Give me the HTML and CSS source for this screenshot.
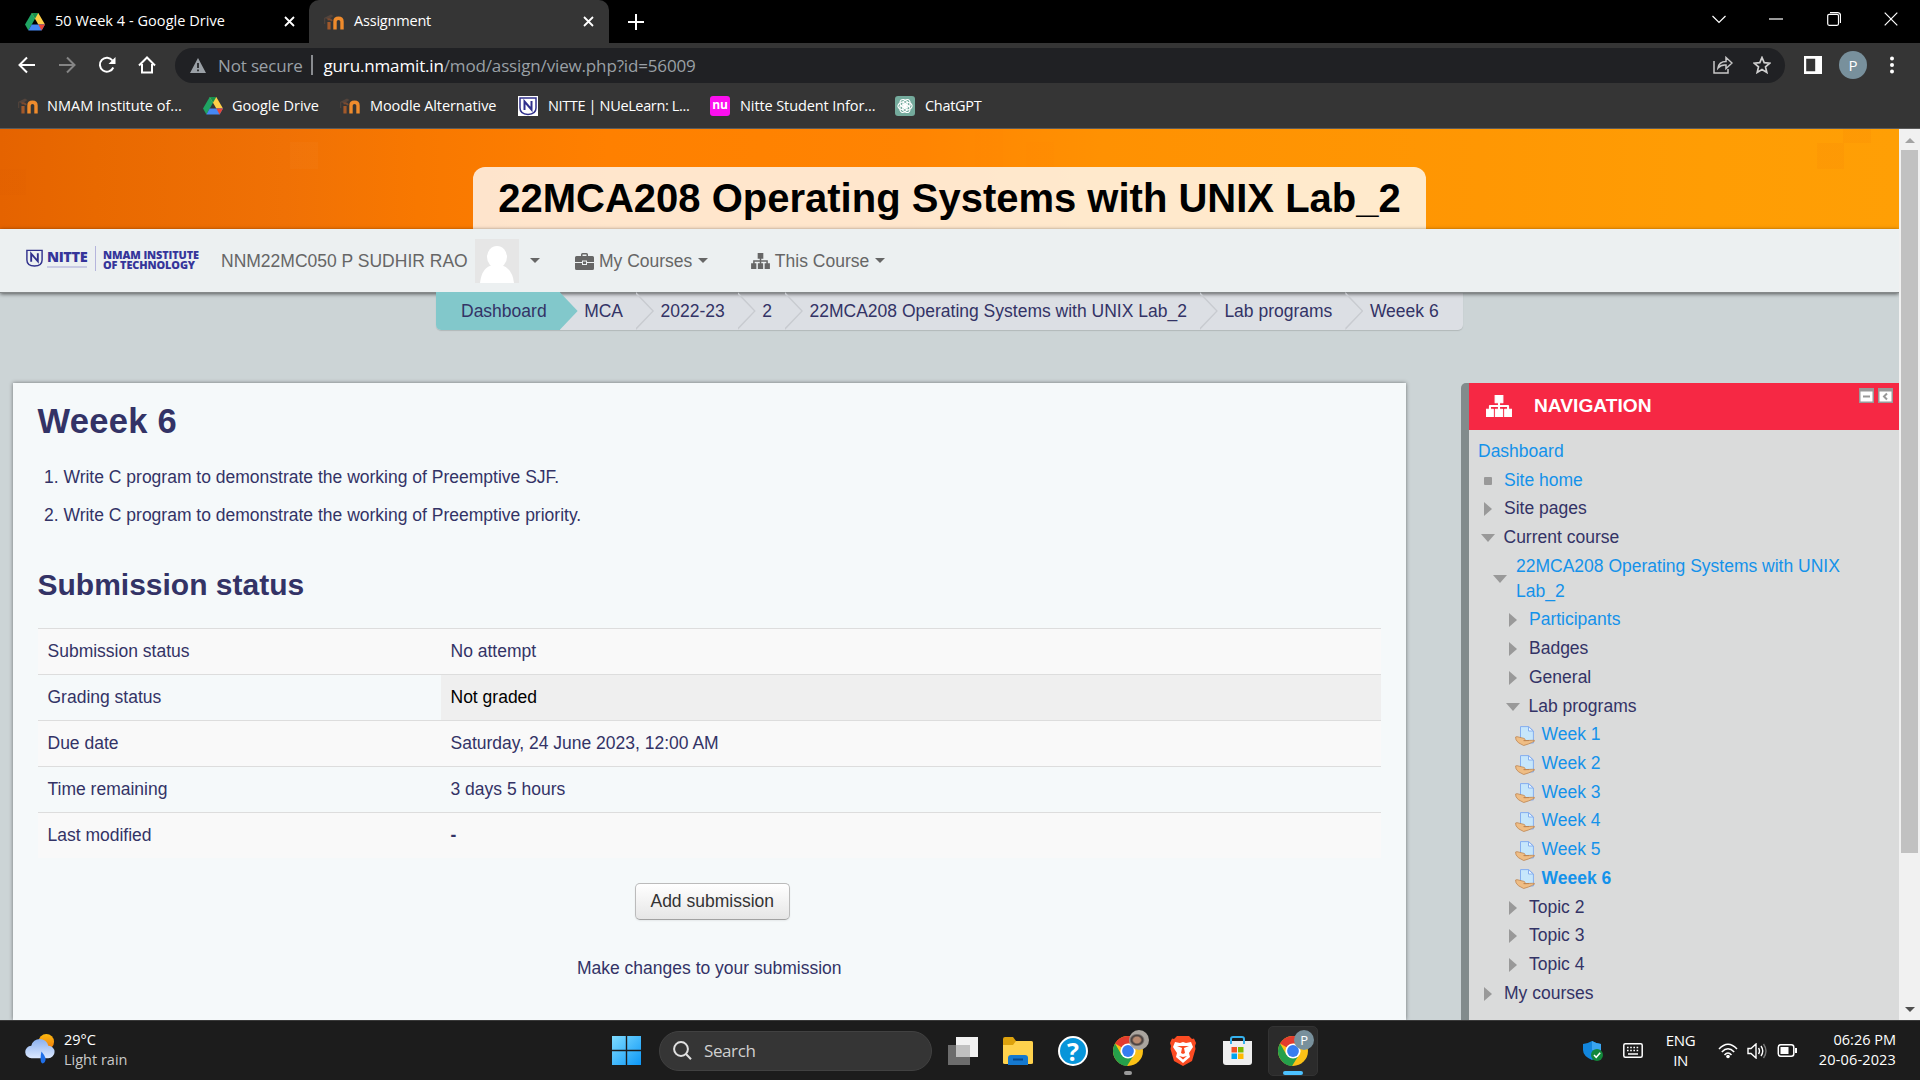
FILE: index.html
```html
<!DOCTYPE html>
<html lang="en">
<head>
<meta charset="utf-8">
<title>Assignment</title>
<link rel="stylesheet" href="styles.css">
</head>
<body>
<svg width="0" height="0" class="defs">
  <symbol id="drive" viewBox="0 0 20 18">
    <path d="M6.7 0h6.6L3.4 17.4 0 11.6z" fill="#1fa463"/><path d="M6.7 0h6.6L20 11.6h-6.7z" fill="#ffcf48"/><path d="M3.4 17.4 6.7 11.6H20l-3.4 5.8z" fill="#4688f4"/><path d="M6.7 0h6.6L10 5.8z" fill="#188f4d"/><path d="M13.3 11.6H20l-3.4 5.8z" fill="#ea4335"/>
  </symbol>
  <symbol id="moodle" viewBox="0 0 20 18">
    <path d="M5 16.500V9" fill="none" stroke="#a2592b" stroke-width="3.200"/><path d="M11 16.500V8.500q0-3.300 3.500-3.300t3.500 3.300v8" fill="none" stroke="#ef8b2c" stroke-width="3.400"/><path d="M0 5l7-3.500 2.500 1.500L4.500 6.500z" fill="#54443c"/><path d="M3.500 6.500q3-1 4.500 1.500" fill="none" stroke="#7a4a30" stroke-width="2"/><path d="M.7 5v6" stroke="#54443c"/>
  </symbol>
  <symbol id="sitemap" viewBox="0 0 20 17">
    <path d="M7 0h6v6H7zM0 11h5.600v6H0zM7.200 11h5.600v6H7.200zM14.400 11H20v6h-5.600z"/><path d="M10 5v7M3 12V8.500h14V12" fill="none" stroke="currentColor" stroke-width="1.600"/>
  </symbol>
  <symbol id="shieldn" viewBox="0 0 20 20">
    <path d="M2 2h16v10q0 6-8 6.500Q2 18 2 12z" fill="none" stroke="#30308c" stroke-width="1.500"/><path d="M6.500 14V5.500l7 8V5" fill="none" stroke="#30308c" stroke-width="2"/>
  </symbol>
  <symbol id="assign" viewBox="0 0 20 20">
    <path d="M5.500.6h8.200L18.400 5v12H5.500z" fill="#c6e6fb" stroke="#85aeef"/><path d="M13.500.8V5h4.700z" fill="#f3faff" stroke="#85aeef"/><path d="M.6 11q1-.8 3.500.2l5 1.200q2 1 .3 2.200l8-.3q2.600-.2 2.200.8-3.200 1.700-6.200 2.900l-4.700 1.500-5.200-2.700q-3.500-3-2.900-5.800z" fill="#efbd84" stroke="#bf8550" stroke-width=".8"/><path d="M8.500 14.600H14" stroke="#bf8550"/>
  </symbol>
  <symbol id="chrome" viewBox="0 0 32 32">
    <circle cx="16" cy="16" r="15" fill="#fbc116"/><path d="M16 16 3 8.500A15 15 0 0 1 29 8.500H16z" fill="#e33b2e"/><path d="M3 8.500A15 15 0 0 0 15 31l7.500-12L16 16 9.500 19.700z" fill="#25a04b"/><circle cx="16" cy="16" r="7.600" fill="#fff"/><circle cx="16" cy="16" r="5.900" fill="#367df0"/>
  </symbol>
</svg>

<div class="window">
  <header class="tabs">
    <div class="tab tab-idle"><svg class="i20" viewBox="0 0 20 18"><use href="#drive"/></svg><span>50 Week 4 - Google Drive</span><svg class="x" viewBox="0 0 11 11"><path d="M1 1l9 9M10 1l-9 9"/></svg></div>
    <div class="tab tab-active"><svg class="i20"><use href="#moodle"/></svg><span>Assignment</span><svg class="x" viewBox="0 0 11 11"><path d="M1 1l9 9M10 1l-9 9"/></svg></div>
    <svg class="plus" viewBox="0 0 16 16"><path d="M8 0v16M0 8h16"/></svg>
    <div class="winctl">
      <svg viewBox="0 0 14 14"><path d="M.5 4 7 10.500 13.500 4"/></svg>
      <svg viewBox="0 0 14 14"><path d="M0 7h14"/></svg>
      <svg viewBox="0 0 14 14"><rect x=".7" y="2.300" width="10.800" height="11" rx="1.500"/><path d="M3 .7h7.500q3 0 3 3V11"/></svg>
      <svg viewBox="0 0 14 14"><path d="M.7.700l12.600 12.600M13.300.700.700 13.300"/></svg>
    </div>
  </header>

  <div class="toolbar">
    <div class="navbtns">
      <svg viewBox="0 0 18 18"><path d="M17 9H2M9 1.500 1.500 9 9 16.500"/></svg>
      <svg class="dim" viewBox="0 0 18 18"><path d="M1 9h15M9 1.500 16.500 9 9 16.500"/></svg>
      <svg viewBox="0 0 18 18"><path d="M15.300 11.500A7 7 0 1 1 14.500 4.500"/><path d="M17.500 1v7h-7z" fill="#fff" stroke="none"/></svg>
      <svg viewBox="0 0 18 18"><path d="M1 9.500 9 1.500l8 8M4 8v8.500h10V8"/></svg>
    </div>
    <div class="omni">
      <svg class="warn" viewBox="0 0 16 15"><path d="M8 0l8 15H0z" fill="#9aa0a6"/><path d="M8 5v5M8 11.500v1.800" stroke="#202124" stroke-width="1.700"/></svg>
      <span class="insecure">Not secure</span><i class="bar"></i>
      <span class="url"><b>guru.nmamit.in</b>/mod/assign/view.php?id=56009</span>
      <svg class="share" viewBox="0 0 20 18"><path d="M1 5v12h14v-4M5 12q1-6.500 8-6.500V1.500l6 5.500-6 5.500V9Q8 8.500 5 12z"/></svg>
      <svg class="star" viewBox="0 0 18 18"><path d="M9 1.500l2.200 5.200 5.600.5-4.300 3.700 1.300 5.500L9 13.500l-4.800 2.900 1.300-5.500L1.200 7.200l5.600-.5z"/></svg>
    </div>
    <svg class="panel" viewBox="0 0 18 18"><path d="M0 0h18v18H0zM2.200 2.700v12.600h9V2.700z" fill="#fff" fill-rule="evenodd"/></svg>
    <span class="me">P</span>
    <svg class="dots" viewBox="0 0 4 18"><circle cx="2" cy="2.500" r="2"/><circle cx="2" cy="9" r="2"/><circle cx="2" cy="15.500" r="2"/></svg>
  </div>

  <nav class="bookmarks">
    <a class="bm bm1"><svg class="i20"><use href="#moodle"/></svg><span>NMAM Institute of...</span></a>
    <a class="bm bm2"><svg class="i20" viewBox="0 0 20 18"><use href="#drive"/></svg><span>Google Drive</span></a>
    <a class="bm bm3"><svg class="i20"><use href="#moodle"/></svg><span>Moodle Alternative</span></a>
    <a class="bm bm4"><svg class="i20 whitebg"><use href="#shieldn"/></svg><span>NITTE | NUeLearn: L...</span></a>
    <a class="bm bm5"><i class="nu">nu</i><span>Nitte Student Infor...</span></a>
    <a class="bm bm6"><svg class="i20 gpt" viewBox="0 0 20 20"><g fill="none" stroke="#fff" stroke-width="1.100"><path id="petal" d="M10 4.200q3.500-2 5 1.500v4l-3.500 2-3.500-2V6z"/><use href="#petal" transform="rotate(60 10 10)"/><use href="#petal" transform="rotate(120 10 10)"/><use href="#petal" transform="rotate(180 10 10)"/><use href="#petal" transform="rotate(240 10 10)"/><use href="#petal" transform="rotate(300 10 10)"/></g></svg><span>ChatGPT</span></a>
  </nav>

  <div class="viewport">
    <div class="page">
      <div class="banner"><h1><span>22MCA208 Operating Systems with UNIX Lab_2</span></h1></div>
      <div class="navbar">
        <div class="logo"><svg class="crest"><use href="#shieldn"/></svg><div class="nitte"><b>NITTE</b><i></i></div><div class="inst">NMAM INSTITUTE<br>OF TECHNOLOGY</div></div>
        <span class="user">NNM22MC050 P SUDHIR RAO</span>
        <svg class="avatar" viewBox="0 0 44 44"><path d="M0 0h44v44H0z" fill="#e6e6e6"/><ellipse cx="22" cy="18" rx="10" ry="11" fill="#fff"/><path d="M5 44q2-17 14-18h6q12 2 14 18z" fill="#fff"/></svg>
        <i class="caret c1"></i>
        <svg class="case" viewBox="0 0 19 17"><path d="M6 3V1.500Q6 0 7.500 0h4Q13 0 13 1.500V3h4.500Q19 3 19 4.500V9h-7V7.500H7V9H0V4.500Q0 3 1.500 3zm1.500 0h4V1.500h-4zM0 10h7v2h5v-2h7v5.500q0 1.500-1.500 1.500h-16Q0 17 0 15.500zM8 8.500h3V11H8z"/></svg>
        <span class="menu">My Courses</span><i class="caret"></i>
        <svg class="tree" viewBox="0 0 20 17"><use href="#sitemap"/></svg>
        <span class="menu">This Course</span><i class="caret"></i>
      </div>
      <div class="crumbs"><ul>
        <li class="home"><span>Dashboard</span></li><li><span>MCA</span></li><li><span>2022-23</span></li><li><span>2</span></li><li><span>22MCA208 Operating Systems with UNIX Lab_2</span></li><li><span>Lab programs</span></li><li class="last"><span>Weeek 6</span></li>
      </ul></div>
      <div class="columns">
        <main class="card">
          <h2>Weeek 6</h2>
          <p class="item">1. Write C program to demonstrate the working of Preemptive SJF.</p>
          <p class="item">2. Write C program to demonstrate the working of Preemptive priority.</p>
          <h3>Submission status</h3>
          <div class="table">
            <div class="row odd"><span>Submission status</span><span>No attempt</span></div>
            <div class="row"><span>Grading status</span><span class="hl">Not graded</span></div>
            <div class="row odd"><span>Due date</span><span>Saturday, 24 June 2023, 12:00 AM</span></div>
            <div class="row"><span>Time remaining</span><span>3 days 5 hours</span></div>
            <div class="row odd"><span>Last modified</span><span class="dash">-</span></div>
          </div>
          <div class="actions"><button>Add submission</button><p>Make changes to your submission</p></div>
        </main>
        <aside class="block">
          <div class="head"><svg viewBox="0 0 20 17"><use href="#sitemap"/></svg><span>NAVIGATION</span>
            <div class="ctl"><svg viewBox="0 0 15 15"><path d="M0 0h15v15H0z" fill="#999"/><path d="M1.500 3.500h12v10h-12z" fill="#fff"/><path d="M4 8.500h7" stroke="#999" stroke-width="2"/></svg><svg viewBox="0 0 15 15"><path d="M0 0h15v15H0z" fill="#999"/><path d="M1.500 3.500h12v10h-12z" fill="#fff"/><path d="M9 5.500l-3 3 3 3" fill="none" stroke="#999" stroke-width="2"/></svg></div>
          </div>
          <ul class="nav">
            <li class="l0 link">Dashboard</li>
            <li class="l1 link"><i class="sq"></i>Site home</li>
            <li class="l1"><i class="rt"></i>Site pages</li>
            <li class="l1"><i class="dn"></i>Current course</li>
            <li class="l2 link tall"><i class="dn"></i><span>22MCA208 Operating Systems with UNIX<br>Lab_2</span></li>
            <li class="l3 link"><i class="rt"></i>Participants</li>
            <li class="l3"><i class="rt"></i>Badges</li>
            <li class="l3"><i class="rt"></i>General</li>
            <li class="l3"><i class="dn"></i>Lab programs</li>
            <li class="l4 link"><svg><use href="#assign"/></svg>Week 1</li>
            <li class="l4 link"><svg><use href="#assign"/></svg>Week 2</li>
            <li class="l4 link"><svg><use href="#assign"/></svg>Week 3</li>
            <li class="l4 link"><svg><use href="#assign"/></svg>Week 4</li>
            <li class="l4 link"><svg><use href="#assign"/></svg>Week 5</li>
            <li class="l4 link cur"><svg><use href="#assign"/></svg>Weeek 6</li>
            <li class="l3"><i class="rt"></i>Topic 2</li>
            <li class="l3"><i class="rt"></i>Topic 3</li>
            <li class="l3"><i class="rt"></i>Topic 4</li>
            <li class="l1"><i class="rt"></i>My courses</li>
          </ul>
        </aside>
      </div>
    </div>
    <div class="scroll"><i class="up"></i><i class="thumb"></i><i class="down"></i></div>
  </div>

  <footer class="taskbar">
    <div class="weather">
      <svg viewBox="0 0 32 32"><defs><linearGradient id="cl" x1="0" y1="0" x2="0" y2="1"><stop stop-color="#8ab0ee"/><stop offset="1" stop-color="#dbe8ff"/></linearGradient><linearGradient id="sn" x1="0" y1="0" x2="0" y2="1"><stop stop-color="#fbb80f"/><stop offset="1" stop-color="#f0790d"/></linearGradient></defs><circle cx="22" cy="8" r="8" fill="url(#sn)"/><path d="M7 25a6.500 6.500 0 0 1-.5-13 9 9 0 0 1 17.500 0 6.500 6.500 0 0 1 0 13z" fill="url(#cl)"/><path d="M17 18q6 7 3.500 11-2.500 3-4 0-1-4 .5-11z" fill="#1f6fe8"/></svg>
      <div><span>29°C</span><span class="sub">Light rain</span></div>
    </div>
    <div class="apps">
      <svg class="start" viewBox="0 0 29 29"><defs><linearGradient id="wn" x1="0" y1="0" x2="1" y2="1"><stop stop-color="#7fdcff"/><stop offset="1" stop-color="#0c97f7"/></linearGradient></defs><path d="M0 0h13.800v13.800H0zM15.200 0H29v13.800H15.200zM0 15.200h13.800V29H0zM15.200 15.200H29V29H15.200z" fill="url(#wn)"/></svg>
      <div class="search"><svg viewBox="0 0 19 19"><circle cx="8" cy="8" r="6.900"/><path d="M13 13l5 5.200"/></svg><span>Search</span></div>
      <svg class="tv" viewBox="0 0 30 28"><path d="M0 8h22v20H0z" fill="#6c6c6c"/><path d="M8 0h22v20H8z" fill="#f2f2f2"/><path d="M8 8h14v12H8z" fill="#c0c0c0"/></svg>
      <svg class="fe" viewBox="0 0 30 28"><path d="M0 2q0-2 2-2h8l3 4h15q2 0 2 2v8H0z" fill="#dda20d"/><path d="M0 8h10l3-4h15q2 0 2 2v20q0 1-2 1H2q-2 0-2-1z" fill="#ffd24d"/><path d="M5 28v-7q0-3 3-3h14q3 0 3 3v7z" fill="#1579d0"/><path d="M10 22.500h10" stroke="#07498c" stroke-width="2"/></svg>
      <span class="help">?</span>
      <div class="ch1"><svg><use href="#chrome"/></svg><i class="face"></i><i class="dot"></i></div>
      <svg class="brave" viewBox="0 0 26 30"><path d="M7 0h12l3 3 2-.5L26 7l-1 3 .5 3L22 25l-9 5-9-5L.5 13 1 10 0 7l2-4.500L4 3z" fill="#fb4b22"/><path d="M5 6l5 1 3-1 3 1 5-1 2 5-4 6 1 4-7 6-7-6 1-4-4-6z" fill="#fff"/><path d="M7 10l5 2-1 5 2 1 2-1-1-5 5-2M9 20l4 1 4-1-4 3.500z" fill="#fb4b22"/></svg>
      <svg class="store" viewBox="0 0 29 29"><path d="M0 5h29v21q0 3-3 3H3q-3 0-3-3z" fill="#eee"/><path d="M8 8V3q0-2 2-2h9q2 0 2 2v5" fill="none" stroke="#35b1ed" stroke-width="2"/><path d="M8.500 11h5.500v5.500H8.500z" fill="#f25022"/><path d="M15 11h5.500v5.500H15z" fill="#7fba00"/><path d="M8.500 17.500h5.500V23H8.500z" fill="#00a4ef"/><path d="M15 17.500h5.500V23H15z" fill="#ffb900"/></svg>
      <div class="ch2"><svg><use href="#chrome"/></svg><i class="pb">P</i><i class="line"></i></div>
    </div>
    <div class="tray">
      <svg class="def" viewBox="0 0 21 20"><path d="M9 0q4 2.500 9 3v6q0 6-9 10Q0 15 0 9V3q5-.5 9-3z" fill="#1286dd"/><path d="M9 0q4 2.500 9 3v6H9z" fill="#3aa5f0"/><circle cx="14" cy="14" r="6" fill="#12873a"/><path d="M11 14l2.200 2.300 4-4.500" fill="none" stroke="#fff" stroke-width="1.500"/></svg>
      <svg class="kb" viewBox="0 0 20 15"><rect x=".8" y=".8" width="18.400" height="13.400" rx="1.500" fill="none" stroke="#fff" stroke-width="1.500"/><path d="M4 4.500h12M4 7.500h12" stroke="#fff" stroke-width="1.600" stroke-dasharray="1.600 1.600"/><path d="M5 11h10" stroke="#fff" stroke-width="1.500"/></svg>
      <div class="lang">ENG<br>IN</div>
      <svg class="wifi" viewBox="0 0 20 16"><g fill="none" stroke="#fff" stroke-width="1.500"><path d="M1 6q9-9.500 18 0M3.800 9q6.200-6.500 12.400 0M6.500 12q3.500-3.800 7 0"/></g><circle cx="10" cy="13.500" r="1.800" fill="#fff"/></svg>
      <svg class="vol" viewBox="0 0 20 16"><g fill="none" stroke="#fff" stroke-width="1.400"><path d="M1 5.500h3L9 1v14l-5-4.500H1zM11.500 5q2 3 0 6M14 3q3.500 5 0 10"/><path d="M16.500 1q5 7 0 14" stroke="#777"/></g></svg>
      <svg class="bat" viewBox="0 0 20 13"><rect x=".8" y=".8" width="15.500" height="11.400" rx="2.500" fill="none" stroke="#fff" stroke-width="1.500"/><rect x="3" y="3" width="8" height="7" fill="#fff"/><path d="M18.500 4v5" stroke="#fff" stroke-width="2"/></svg>
      <div class="clock"><span>06:26 PM</span><br><span class="date">20-06-2023</span></div>
    </div>
  </footer>
</div>
</body>
</html>
```

FILE: styles.css
```css
*{box-sizing:border-box}
body{margin:0;overflow:hidden;font-family:"Liberation Sans",Arial,sans-serif;font-size:17.5px;color:#333366}
svg{display:block;flex:none}
i{font-style:normal;flex:none}
h1,h2,h3,p,ul{margin:0;padding:0}
ul{list-style:none}
.defs{position:absolute}
.window{width:1920px;height:1080px;display:flex;flex-direction:column;white-space:nowrap}

/* browser frame */
.tabs,.toolbar,.bookmarks,.taskbar{font-family:"Open Sans","Noto Sans",sans-serif;color:#fff}
.tabs{height:43px;background:#000;display:flex;align-items:center}
.tab{height:43px;display:flex;align-items:center;font-size:14.5px;letter-spacing:.05px}
.tab span{flex:1;padding-bottom:2px}
.tab-idle{width:309px;padding:0 14px 0 25px;gap:10px}
.tab-active{width:300px;padding:0 15px;gap:10px;background:#353535;border-radius:10px 10px 0 0;letter-spacing:-.2px}
.i20{width:20px;height:18px}
.x{width:11px;height:11px;stroke:#fff;stroke-width:1.8}
.plus{width:16px;height:16px;margin-left:19px;stroke:#fff;stroke-width:2}
.winctl{display:flex;gap:43.300px;margin-left:auto;margin-right:22px;padding-bottom:6px}
.winctl svg{width:14px;height:14px;fill:none;stroke:#fff;stroke-width:1.200}
.toolbar{height:43px;background:#353535;display:flex;align-items:center;padding-top:1px}
.navbtns{width:175px;padding-left:18px;display:flex;gap:22px}
.navbtns svg{width:18px;height:18px;fill:none;stroke:#fff;stroke-width:2}
.navbtns .dim{stroke:#858585}
.omni{width:1610px;height:35px;border-radius:18px;background:#202124;display:flex;align-items:center;font-size:17px;color:#9aa0a6;letter-spacing:-.15px}
.warn{width:16px;height:15px;margin-left:15px}
.insecure{width:93px;margin-left:12px}
.bar{width:1.500px;height:20px;background:#898c90;margin:0 11px 0 0}
.url b{font-weight:400;color:#fff}
.share{width:20px;height:18px;margin-left:auto;fill:none;stroke:#c7c7c7;stroke-width:1.500}
.star{width:18px;height:18px;margin:0 14px 0 20px;fill:none;stroke:#d0d0d0;stroke-width:1.700}
.panel{width:18px;height:18px;margin-left:19px}
.me{width:28px;height:28px;margin-left:17px;border-radius:50%;background:#78909c;text-align:center;font-size:15px;line-height:28px}
.dots{width:4px;height:18px;margin-left:23px;fill:#fff}
.bookmarks{height:43px;background:#353535;border-bottom:1px solid #5b5b5b;display:flex;align-items:center;padding:0 0 2px 18px;font-size:14.500px;letter-spacing:-.1px}
.bm{display:flex;align-items:center;gap:10px}
.bm span{padding-bottom:2px}
.bm1{width:185px;letter-spacing:0;gap:9px}.bm2{width:137px;letter-spacing:0;gap:9px}.bm3{width:178px}.bm4{width:192px;letter-spacing:-.36px}.bm5{width:185px}.bm6{letter-spacing:-.3px}
.whitebg{background:#fff;height:20px}
.nu{width:20px;height:20px;border-radius:3px;background:#fc0fef;font-size:12px;font-weight:700;line-height:17px;text-align:center}
.gpt{height:20px;border-radius:3px;background:#74aa9c}

/* page */
.viewport{height:891px;display:flex}
.page{width:1899px;background:#ccd4d6;overflow:hidden;display:flex;flex-direction:column}
.banner{height:100px;flex:none;display:flex;justify-content:center;align-items:flex-end;background:
 linear-gradient(#e7500010,#e7500010) 1817px 14px/27px 26px no-repeat,
 linear-gradient(#e7500010,#e7500010) 1843px 0/28px 14px no-repeat,
 linear-gradient(#ff800018,#ff800018) 1026px 13px/28px 27px no-repeat,
 linear-gradient(#ff800018,#ff800018) 975px 0/28px 40px no-repeat,
 linear-gradient(#ffffff05,#ffffff05) 290px 13px/28px 27px no-repeat,
 linear-gradient(#d0500010,#d0500010) 0 40px/26px 26px no-repeat,
 linear-gradient(90deg,#e56300 0,#e96900 5%,#f07105 15%,#f87800 22%,#ff8000 32%,#ff8402 48%,#ff9102 58%,#ff9703 78%,#ff9d04 90%,#ff9f05 100%)}
.banner h1{width:953px;height:62px;border-radius:12px 12px 0 0;background:#ffffffcc;color:#000;font-size:40px;line-height:62px;text-align:center}
.navbar{height:64px;flex:none;background:#ecf0f1;position:relative;display:flex;align-items:center;color:#666;box-shadow:0 1px 4px #0009,inset 0 -1px #85898a}
.logo{width:221px;flex:none;padding-left:25px;height:26px;display:flex;color:#35359a;margin-top:-4px}
.crest{width:19px;height:24px;margin-right:3px}
.nitte{width:49px;height:25px;border-right:1px solid #b5b5dc;font:800 14.500px/17px "Open Sans",sans-serif}
.nitte b{display:block;height:18px;margin-top:2px;letter-spacing:-.4px}
.nitte i{display:block;width:40px;height:2px;background:#c9cbe3}
.inst{font:800 10.900px/10px "Open Sans",sans-serif;margin:4px 0 0 7px;letter-spacing:-.1px}
.user{width:254px;flex:none}
.avatar{width:44px;height:44px}
.caret{width:0;border:5px solid transparent;border-top-color:#666;border-bottom:0;margin:0 0 2px 5.500px}
.caret.c1{margin:0 35px 2px 11px}
.case{width:19px;height:17px;fill:#666;margin-right:5px}
.tree{width:19px;height:16px;color:#666;fill:#666;margin:0 5px 0 43px}
.user,.menu{padding-top:1px}
.crumbs{height:39px;flex:none;display:flex;justify-content:center}
.crumbs ul{display:flex;width:1027px;height:38px;background:#dcdfe4;border-radius:0 0 5px 5px;box-shadow:0 1px 1px #0002;overflow:hidden;margin-top:-1px}
.crumbs li{display:flex;align-items:center;position:relative;padding:0 13px 0 24.500px}
.crumbs li.home{background:#82c8cb;padding-left:25px}
.crumbs li:not(.last)::after{content:"";position:absolute;left:100%;top:0;width:18px;height:38px;background:#c8cbd0;clip-path:polygon(0 0,100% 50%,0 100%,0 94%,90% 50%,0 6%)}
.crumbs li.home::after{background:#82c8cb;clip-path:polygon(0 0,100% 50%,0 100%)}
.crumbs li.last{padding-right:0}
.columns{display:flex;margin-top:51px;padding-left:13px;gap:55px;flex:1}
.card{width:1393px;padding:19px 25px 0 24.500px;background:#f5f9fa;box-shadow:0 0 4px #0007}
h2{font-size:34.500px;line-height:38px;height:62px;letter-spacing:.3px}
.item{padding-left:6.500px;height:38px;line-height:25px}
.item+h3{margin-top:23px}
.item:first-of-type{margin-top:1px}
h3{font-size:30px;line-height:41px;height:64px}
.row{display:grid;grid-template-columns:403px 1fr;height:46px;border-top:1px solid #ddd;line-height:44px}
.row span{padding-left:10px}
.odd{background:#f9f9f9}
.row .hl{background:#efefef;color:#000}
.row .dash{font-weight:700}
.actions{padding:25px 0 0 6px;display:flex;flex-direction:column;align-items:center}
button{width:155px;height:37px;padding:0;border:1px solid #bbb;border-bottom-color:#a2a2a2;border-radius:5px;background:linear-gradient(#fff,#e6e6e6);font:17.500px "Liberation Sans",sans-serif;color:#333;box-shadow:0 1px 2px #0001}
.actions p{margin:37px 6px 0 0;line-height:22px}
.block{width:438px;border-left:8px solid #828b8c;border-top-left-radius:5px;background:#dadbdb}
.head{height:47px;background:#f62844;color:#fff;display:flex;align-items:center;font-weight:700;font-size:19.200px;padding:0 6px 2px 17px}
.head>svg{width:26px;height:22px;fill:#fff;stroke:#fff;stroke-width:.8;stroke-linejoin:round}
.head span{margin-left:22px;flex:1}
.ctl{display:flex;gap:4px;margin-bottom:20px}
.ctl svg{width:15px;height:15px}
.nav{padding-top:7px}
.nav li{height:28.720px;display:flex;align-items:center;line-height:25px}
.nav .link{color:#1492ea}
.l0{padding-left:9px}.l1{padding-left:11px}.l2{padding-left:23.500px}.l3{padding-left:36px}.l4{padding-left:46px}
.nav .tall{height:53.700px}
.sq{width:8px;height:8px;margin:1px 12px 0 4px;background:#999;border-radius:1px}
.rt{margin:1px 12px 0 4px;border:7.500px solid transparent;border-left:8px solid #999;border-right:0}
.dn{margin:1px 9px 0 .5px;border:7.500px solid transparent;border-top:8px solid #999;border-bottom:0}
.nav svg{width:20px;height:20px;margin:2px 6.500px 0 0}
.cur{font-weight:700}
.scroll{width:21px;background:#f1f1f1;display:flex;flex-direction:column;align-items:center}
.up{border:5px solid transparent;border-bottom-color:#a3a3a3;border-top:0;margin-top:9px}
.thumb{width:17px;height:703px;background:#c1c1c1;margin-top:7px}
.down{border:5px solid transparent;border-top-color:#505050;border-bottom:0;margin-top:154px}

/* taskbar */
.taskbar{height:60px;background:#1c1c1c;border-top:1px solid #393939;display:grid;grid-template-columns:612px 971px 1fr;align-items:center;font-size:15px;letter-spacing:-.4px}
.weather{display:flex;gap:8px;padding-left:25px}
.weather svg{width:31px;height:31px;margin-top:2px}
.weather div{display:grid;line-height:20px;margin-top:-2px;font-size:14.500px;letter-spacing:0}
.sub{color:#c9c9c9}
.apps{display:flex;align-items:center;height:59px}
.start{width:29px;height:29px}
.search{width:273px;height:40px;margin:0 16px 0 18px;border-radius:20px;background:#353535;border:1px solid #414141;display:flex;align-items:center;gap:12px;padding-left:13px;font-size:17px;color:#d0d0d0}
.search svg{width:19px;height:19px;fill:none;stroke:#e0e0e0;stroke-width:2}
.tv,.fe{width:30px;height:28px}
.fe{margin-left:25px}
.help{width:30px;height:30px;margin-left:25px;border:2px solid #fff;border-radius:50%;background:#0795da;text-align:center;font:700 25px/26px "Open Sans",sans-serif;letter-spacing:0}
.ch1,.ch2{position:relative;width:32px;height:50px;display:flex;align-items:center;margin-left:24px}
.ch1 svg,.ch2 svg{width:32px;height:32px}
.face,.pb{position:absolute;width:20px;height:20px;border-radius:50%}
.face{left:17px;top:4px;background:radial-gradient(ellipse at 40% 50%,#b88a70 0 20%,#4c4442 30% 34%,#aaa59f 46%)}
.dot{position:absolute;left:12px;bottom:1px;width:8px;height:4px;border-radius:2px;background:#9a9a9a}
.brave{width:26px;height:30px;margin-left:26px}
.store{width:29px;height:29px;margin-left:27px}
.ch2{width:50px;margin-left:16px;padding-left:8px;border-radius:5px;background:#2b2b2b;border:1px solid #333}
.pb{left:25px;top:3px;background:#78909c;font-size:13px;line-height:20px;text-align:center}
.line{position:absolute;left:14px;bottom:0;width:20px;height:4px;border-radius:2px;background:#4cc2ff}
.tray{display:flex;align-items:center}
.def{width:21px;height:20px}
.kb{width:20px;height:15px;margin-left:19px}
.lang{width:32px;margin-left:21.500px;margin-top:-2px;text-align:center;line-height:20px}
.wifi{width:20px;height:16px;margin-left:21.500px}
.vol{width:20px;height:16px;margin-left:9px}
.bat{width:21px;height:13px;margin-left:10px}
.clock{flex:1;text-align:right;padding-right:24px;line-height:20px;margin-top:-2px;font-size:14.500px;letter-spacing:0}
.date{letter-spacing:.15px}
```
